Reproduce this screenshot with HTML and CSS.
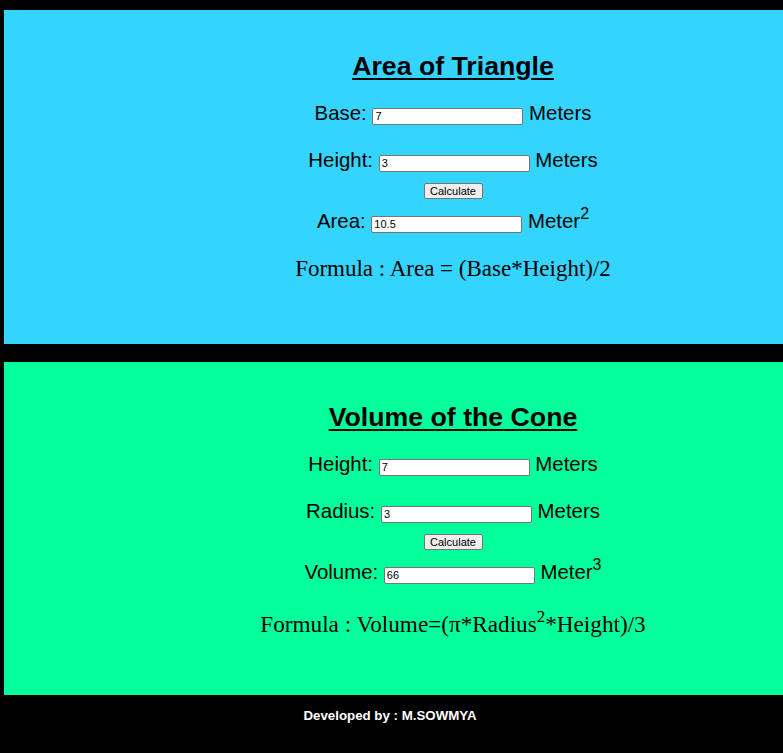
FILE: index.html
```html
<!DOCTYPE html>
<html>
<head>
<meta charset="utf-8">
<title>Area and Volume</title>
<link rel="stylesheet" href="styles.css">
</head>
<body>
<section class="panel panel-tri">
  <h2 class="title">Area of Triangle</h2>
  <div class="row first">Base: <input class="field" type="text" value="7"> Meters</div>
  <div class="row gap">Height: <input class="field" type="text" value="3"> Meters</div>
  <div class="btn-row"><button class="btn">Calculate</button></div>
  <div class="row">Area: <input class="field" type="text" value="10.5"> Meter<sup>2</sup></div>
  <p class="formula">Formula : Area = (Base*Height)/2</p>
</section>
<section class="panel panel-cone">
  <h2 class="title">Volume of the Cone</h2>
  <div class="row first">Height: <input class="field" type="text" value="7"> Meters</div>
  <div class="row gap">Radius: <input class="field" type="text" value="3"> Meters</div>
  <div class="btn-row"><button class="btn">Calculate</button></div>
  <div class="row">Volume: <input class="field" type="text" value="66"> Meter<sup>3</sup></div>
  <p class="formula cone">Formula : Volume=(π*Radius<sup>2</sup>*Height)/3</p>
</section>
<footer class="footer">Developed by : M.SOWMYA</footer>
</body>
</html>
```
FILE: styles.css
```css
html, body {
  background: #000;
}
body {
  margin: 0;
  padding: 10px 0 0 4px;
  font-family: "Liberation Sans", Arial, sans-serif;
  color: #000;
  overflow-x: hidden;
}
.panel {
  padding: 0 0 0 119px;
  text-align: center;
}
.panel-tri {
  background: #33d5ff;
  padding-top: 41px;
  height: 334px;
  box-sizing: border-box;
}
.panel-cone {
  background: #03ff9c;
  margin-top: 18px;
  padding-top: 40px;
  height: 333px;
  box-sizing: border-box;
}
.title {
  margin: 0;
  font-size: 26.7px;
  line-height: 30px;
  font-weight: bold;
  text-decoration: underline;
  text-underline-offset: 3px;
}
.row {
  font-size: 20.4px;
  line-height: 24px;
  height: 24px;
}
.row.first {
  margin-top: 20px;
}
.row.gap {
  margin-top: 23px;
}
.row sup {
  font-size: 16px;
  vertical-align: 9px;
  line-height: 0;
}
.field {
  width: 151px;
  height: 17px;
  box-sizing: border-box;
  font-family: "Liberation Sans", Arial, sans-serif;
  font-size: 11px;
  padding: 1px 2px;
  border: 1px solid #767676;
  border-radius: 2px;
  background: #fff;
  color: #000;
}
.btn-row {
  margin-top: 11px;
  height: 16px;
  margin-bottom: 10px;
}
.btn {
  height: 16px;
  width: 59px;
  padding: 0;
  font-family: "Liberation Sans", Arial, sans-serif;
  font-size: 11px;
  background: #efefef;
  border: 1px solid #767676;
  border-radius: 2px;
  color: #000;
  display: inline-block;
  vertical-align: top;
}
.formula {
  margin: 23px 0 0;
  font-family: "Liberation Serif", "Times New Roman", serif;
  font-size: 23px;
  line-height: 26px;
}
.formula.cone {
  margin-top: 27px;
  font-size: 23.2px;
}
.formula sup {
  font-size: 17px;
  vertical-align: 10px;
  line-height: 0;
}
.footer {
  margin-left: -7px;
  text-align: center;
  color: #fff;
  font-weight: bold;
  font-size: 13.3px;
  padding: 13px 0 30px;
}
```
